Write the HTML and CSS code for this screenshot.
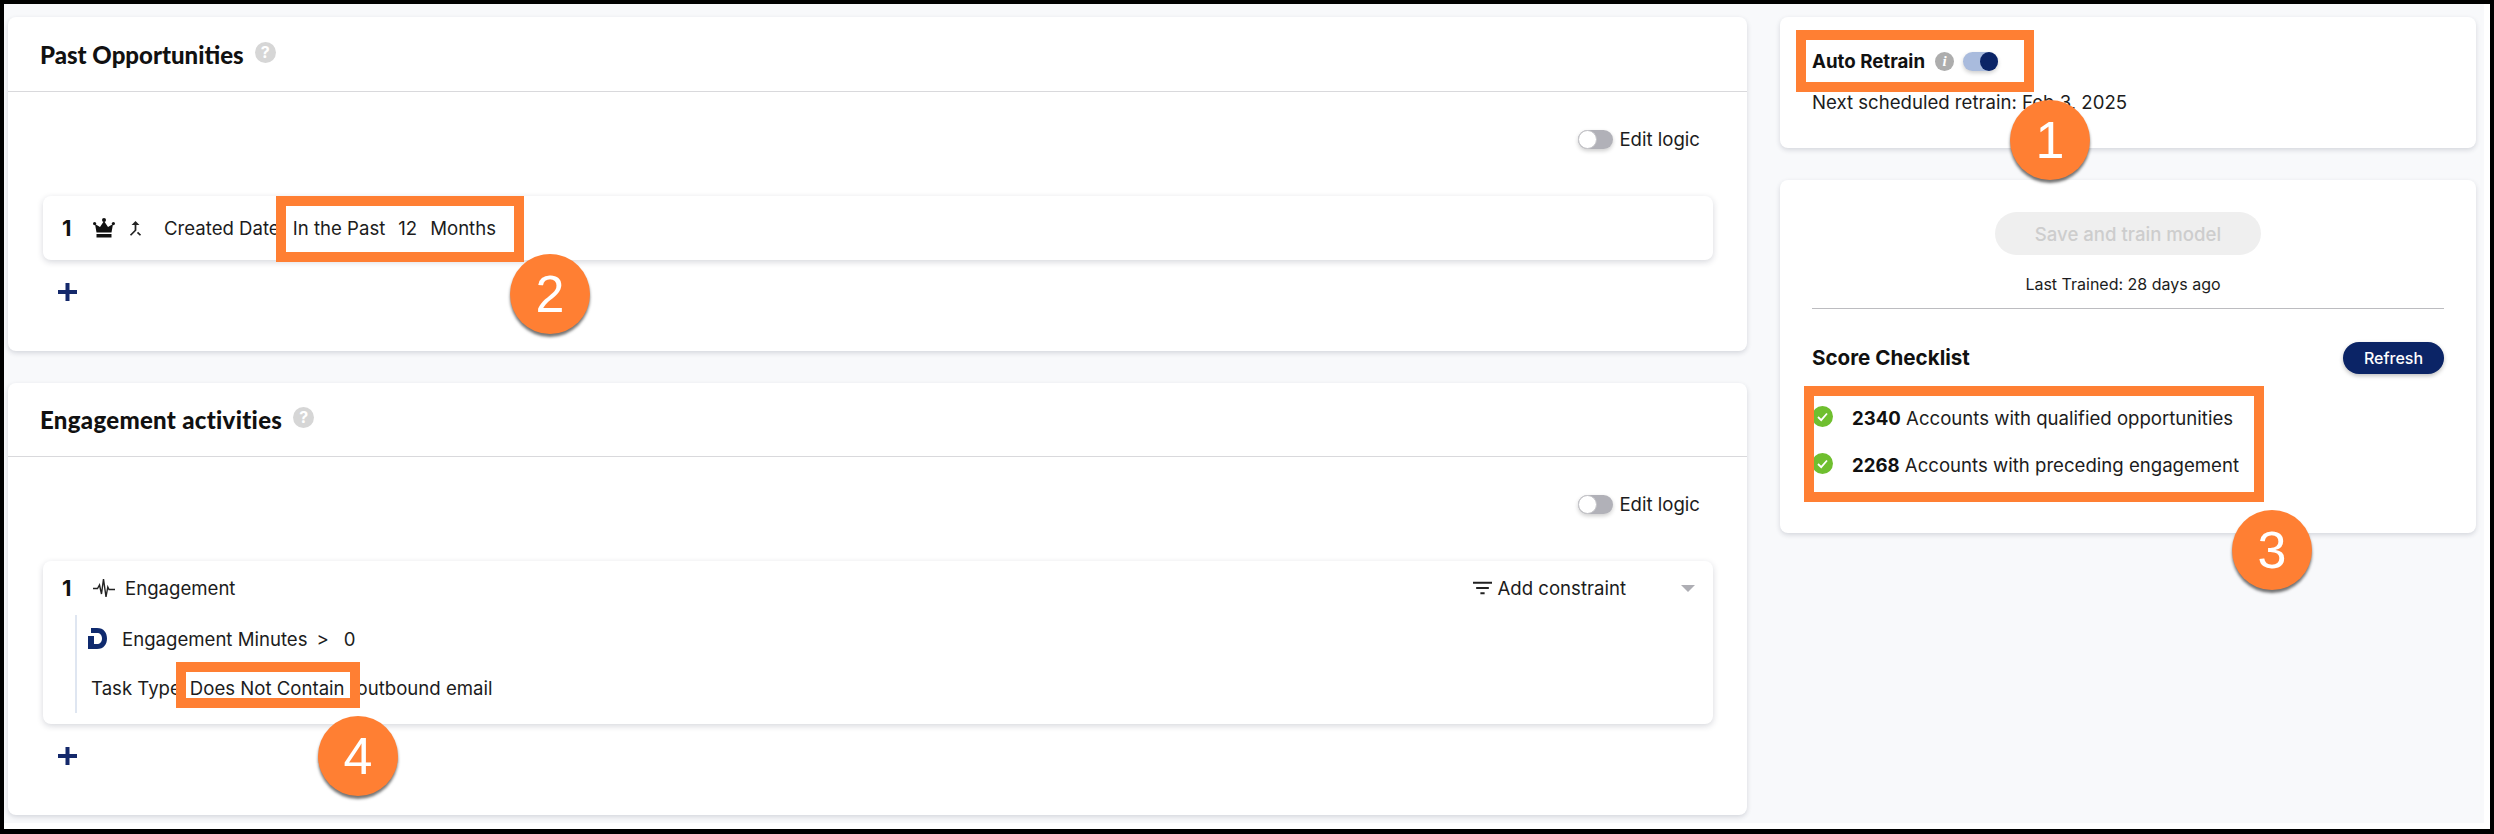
FILE: index.html
```html
<!DOCTYPE html>
<html lang="en">

<head>
    <meta charset="UTF-8">
    <title>Score settings</title>
    <link rel="stylesheet" href="styles.css">
</head>

<body>
    <div class="screen">
        <div class="page">
            <div class="left_col">
                <section class="card past">
                    <div class="card_head">
                        <h2>Past Opportunities</h2>
                        <span class="help">?</span>
                    </div>
                    <div class="logic_bar">
                        <span class="toggle"><span class="knob"></span></span>
                        <span>Edit logic</span>
                    </div>
                    <div class="rule_card short">
                        <div class="rule_line">
                            <span class="num">1</span>
                            <svg class="crown" viewBox="0 0 22 20">
                                <circle cx="11" cy="2" r="2" />
                                <circle cx="1.6" cy="5.6" r="1.6" />
                                <circle cx="20.4" cy="5.6" r="1.6" />
                                <path d="M11 3 15 9 20 6 18.5 14.5H3.5L2 6 7 9Z" />
                                <path d="M3.5 16H18.5V19.5H3.5Z" />
                            </svg>
                            <svg class="merge" viewBox="0 0 24 24">
                                <path d="M17 20.41L18.41 19 15 15.59 13.59 17 17 20.41zM7.5 8H11v5.59L5.59 19 7 20.41l6-6V8h3.5L12 3.5 7.5 8z" />
                            </svg>
                            <span class="field">Created Date</span>
                            <span class="past_op">In the Past</span>
                            <span class="past_num">12</span>
                            <span class="past_unit">Months</span>
                        </div>
                    </div>
                    <div class="plus">
                        <svg viewBox="0 0 19 18"><path d="M7.5 0h4v7h7.5v4h-7.5v7h-4v-7H0V7h7.5z" /></svg>
                    </div>
                </section>

                <section class="card engage">
                    <div class="card_head">
                        <h2>Engagement activities</h2>
                        <span class="help">?</span>
                    </div>
                    <div class="logic_bar">
                        <span class="toggle"><span class="knob"></span></span>
                        <span>Edit logic</span>
                    </div>
                    <div class="rule_card tall">
                        <div class="rule_line">
                            <span class="num">1</span>
                            <svg class="pulse" viewBox="0 0 22 20">
                                <path d="M0 10.5H4.5L6.5 7 8.5 16 10.5 1 13 19 14.8 9 16 11.5H22" />
                            </svg>
                            <span class="eng_name">Engagement</span>
                            <span class="constraint">
                                <svg class="filter" viewBox="3 6 18 12">
                                    <path d="M10 18h4v-2h-4v2zM3 6v2h18V6H3zm3 7h12v-2H6v2z" />
                                </svg>
                                Add constraint
                            </span>
                            <span class="caret"></span>
                        </div>
                        <div class="sub_rules">
                            <div class="sub_line">
                                <svg class="d_logo" viewBox="0 0 19 21">
                                    <path d="M3 0H9C16 0 19 5 19 10.5 19 16 16 21 9 21H0V8H6V16H9C12 16 14 14 14 10.5 14 7 12 5 9 5H3Z" />
                                </svg>
                                <span>Engagement Minutes</span>
                                <span class="op">&gt;</span>
                                <span class="op">0</span>
                            </div>
                            <div class="sub_line task">
                                <span>Task Type</span>
                                <span class="contain">Does Not Contain</span>
                                <span class="outbound">outbound email</span>
                            </div>
                        </div>
                    </div>
                    <div class="plus">
                        <svg viewBox="0 0 19 18"><path d="M7.5 0h4v7h7.5v4h-7.5v7h-4v-7H0V7h7.5z" /></svg>
                    </div>
                </section>
            </div>

            <div class="right_col">
                <section class="card retrain">
                    <div class="retrain_head">
                        <strong>Auto Retrain</strong>
                        <span class="info">i</span>
                        <span class="toggle on"><span class="knob"></span></span>
                    </div>
                    <p class="next">Next scheduled retrain: Feb 3, 2025</p>
                </section>

                <section class="card checklist">
                    <div class="save_wrap">
                        <button class="save">Save and train model</button>
                        <div class="last">Last Trained: 28 days ago</div>
                    </div>
                    <div class="check_head">
                        <h3>Score Checklist</h3>
                        <button class="refresh">Refresh</button>
                    </div>
                    <ul class="check_list">
                        <li>
                            <svg class="tick" viewBox="0 0 21 21">
                                <circle cx="10.5" cy="10.5" r="10.5" fill="#6fbf2f" />
                                <path d="M6 11 9.2 14.2 15 7.5" fill="none" stroke="#fff" stroke-width="1.8" />
                            </svg>
                            <span><b>2340</b> Accounts with qualified opportunities</span>
                        </li>
                        <li>
                            <svg class="tick" viewBox="0 0 21 21">
                                <circle cx="10.5" cy="10.5" r="10.5" fill="#6fbf2f" />
                                <path d="M6 11 9.2 14.2 15 7.5" fill="none" stroke="#fff" stroke-width="1.8" />
                            </svg>
                            <span><b>2268</b> Accounts with preceding engagement</span>
                        </li>
                    </ul>
                </section>
            </div>
        </div>

        <!-- annotations on top of the screenshot -->
        <div class="mark mark1"></div>
        <div class="mark mark2"></div>
        <div class="mark mark3"></div>
        <div class="mark mark4"></div>
        <div class="badge badge1">1</div>
        <div class="badge badge2">2</div>
        <div class="badge badge3">3</div>
        <div class="badge badge4">4</div>
    </div>
</body>

</html>
```

FILE: styles.css
```css
* {
    box-sizing: border-box;
}

body {
    margin: 0;
    font-family: "Inter", "Liberation Sans", sans-serif;
    font-size: 18.6px;
    color: #1c1c20;
}

.screen {
    position: relative;
    width: 2494px;
    height: 834px;
    overflow: hidden;
    background: #fff;
    border: solid #000;
    border-width: 4px 4px 5px 4px;
}

.page {
    width: 2480px;
    height: 819px;
    display: flex;
    gap: 33px;
    padding: 13px 8px 0 4px;
    background: #f8f9fb;
}

.left_col {
    width: 1739px;
    display: flex;
    flex-direction: column;
    gap: 32px;
}

.right_col {
    width: 696px;
    display: flex;
    flex-direction: column;
    gap: 32px;
}

.card {
    background: #fff;
    border-radius: 8px;
    box-shadow: 0 2px 5px rgba(30, 35, 60, 0.16);
}

.past {
    height: 334px;
}

.engage {
    height: 432px;
}

.card_head {
    height: 75px;
    display: flex;
    align-items: center;
    padding-left: 32px;
    border-bottom: 1px solid #d9d9dc;
}

.engage .card_head {
    height: 74px;
}

h2 {
    margin: 0;
    font-family: "Lato", sans-serif;
    font-size: 24px;
    font-weight: 900;
    color: #111;
}

.engage h2 {
    letter-spacing: 0.3px;
}

.help {
    width: 21px;
    height: 21px;
    margin-left: 11px;
    margin-top: -4px;
    border-radius: 50%;
    background: #d6d6d6;
    color: #fff;
    font-size: 16px;
    font-weight: 700;
    line-height: 21px;
    text-align: center;
}

.logic_bar {
    height: 104px;
    display: flex;
    justify-content: flex-end;
    align-items: flex-start;
    gap: 6px;
    padding: 35px 47px 0 0;
    line-height: 24px;
}

.toggle {
    display: block;
    position: relative;
    width: 35px;
    height: 19px;
    margin-top: 3px;
    border-radius: 10px;
    background: #b1b1b8;
    box-shadow: 0 2px 4px rgba(0, 0, 0, 0.2);
}

.knob {
    position: absolute;
    left: 0;
    top: 0;
    width: 19px;
    height: 19px;
    border-radius: 50%;
    background: #fff;
    border: 1px solid #c4c4c8;
}

.toggle.on {
    margin: 0 0 0 9px;
    background: #a9bbdd;
}

.toggle.on .knob {
    left: 17px;
    width: 18px;
    background: #0b2466;
    border: 0;
}

.rule_card {
    margin: 0 34px 0 35px;
    padding: 0 19px;
    background: #fff;
    border-radius: 8px;
    box-shadow: 0 2px 6px rgba(30, 35, 60, 0.18);
}

.short {
    height: 64px;
}

.short .rule_line {
    height: 64px;
    padding-top: 0;
}

.tall {
    height: 163px;
}

.rule_line {
    height: 54px;
    display: flex;
    align-items: center;
}

.num {
    width: 12px;
    font-size: 22px;
    font-weight: 700;
    color: #111;
}

.crown {
    width: 22px;
    height: 20px;
    margin-left: 19px;
    fill: #111;
}

.merge {
    width: 21px;
    height: 21px;
    margin-left: 10px;
    fill: #222;
}

.field {
    margin-left: 18px;
}

.past_op {
    margin-left: 13px;
}

.past_num,
.past_unit {
    margin-left: 13px;
}

.pulse {
    width: 22px;
    height: 20px;
    margin-left: 19px;
    fill: none;
    stroke: #222;
    stroke-width: 1.4;
}

.eng_name {
    margin-left: 10px;
}

.constraint {
    display: flex;
    align-items: center;
    gap: 6px;
    margin-left: auto;
    margin-right: 55px;
}

.filter {
    width: 19px;
    height: 14px;
    fill: #222;
}

.caret {
    width: 0;
    height: 0;
    margin-right: -1px;
    border-left: 7px solid transparent;
    border-right: 7px solid transparent;
    border-top: 7px solid #aeaeb4;
}

.sub_rules {
    height: 98px;
    margin-left: 13px;
    padding-left: 11px;
    border-left: 2px solid #dfe6f1;
}

.sub_line {
    display: flex;
    align-items: center;
    height: 47px;
}

.task {
    height: 51px;
    padding-left: 3px;
}

.d_logo {
    width: 19px;
    height: 21px;
    margin-right: 15px;
    fill: #0f2a6e;
}

.op {
    margin-left: 9px;
}

.op + .op {
    margin-left: 15px;
}

.contain {
    margin-left: 9px;
}

.outbound {
    margin-left: 12px;
}

.plus {
    margin: 23px 0 0 50px;
    height: 18px;
}

.plus svg {
    display: block;
    width: 19px;
    height: 18px;
    fill: #14296b;
}

.retrain {
    height: 131px;
    padding: 32px 32px 0;
}

.retrain_head {
    display: flex;
    align-items: center;
    height: 24px;
}

.retrain_head strong {
    font-size: 18.7px;
    font-weight: 700;
    color: #111;
}

.info {
    width: 19px;
    height: 19px;
    margin-left: 10px;
    border-radius: 50%;
    background: #adadad;
    color: #fff;
    font-family: "Liberation Serif", serif;
    font-size: 15px;
    font-weight: 700;
    font-style: italic;
    line-height: 19px;
    text-align: center;
}

.next {
    margin: 17px 0 0;
    line-height: 24px;
}

.checklist {
    height: 353px;
    padding: 32px 32px 0;
}

.save_wrap {
    display: flex;
    flex-direction: column;
    align-items: center;
    height: 97px;
    border-bottom: 1px solid #bcbcc0;
}

.save {
    width: 266px;
    height: 43px;
    border: 0;
    border-radius: 22px;
    background: #efefef;
    color: #cdcdcd;
    font: 500 18.6px "Inter", sans-serif;
}

.last {
    margin: 19px 10px 0 0;
    font-size: 16px;
    line-height: 20px;
}

.check_head {
    display: flex;
    justify-content: space-between;
    align-items: center;
    margin-top: 32px;
    height: 33px;
}

h3 {
    margin: 0;
    font-size: 20.6px;
    font-weight: 700;
    color: #111;
}

.refresh {
    width: 101px;
    height: 32px;
    border: 0;
    border-radius: 16px;
    background: #0b2466;
    color: #fff;
    font: 500 16px "Inter", sans-serif;
    box-shadow: 0 2px 4px rgba(0, 0, 0, 0.25);
}

.check_list {
    margin: 20px 0 0;
    padding: 0;
    list-style: none;
}

.check_list li {
    display: flex;
    align-items: center;
    gap: 19px;
    height: 47px;
}

.tick {
    width: 21px;
    height: 21px;
    margin-top: -2px;
}

.check_list b {
    font-weight: 700;
    color: #111;
}

/* annotations */
.mark {
    position: absolute;
    border: 10px solid #ff7f33;
}

.mark1 {
    left: 1792px;
    top: 26px;
    width: 238px;
    height: 62px;
}

.mark2 {
    left: 272px;
    top: 192px;
    width: 248px;
    height: 66px;
}

.mark3 {
    left: 1800px;
    top: 382px;
    width: 460px;
    height: 116px;
}

.mark4 {
    left: 172px;
    top: 658px;
    width: 184px;
    height: 46px;
}

.badge {
    position: absolute;
    width: 80px;
    height: 80px;
    border-radius: 50%;
    background: #ff7f33;
    color: #fff;
    font-family: "Liberation Sans", sans-serif;
    font-size: 52px;
    line-height: 80px;
    text-align: center;
    box-shadow: 0 3px 3px rgba(0, 0, 0, 0.55);
}

.badge1 {
    left: 2006px;
    top: 96px;
}

.badge2 {
    left: 506px;
    top: 250px;
}

.badge3 {
    left: 2228px;
    top: 506px;
}

.badge4 {
    left: 314px;
    top: 712px;
}
```
